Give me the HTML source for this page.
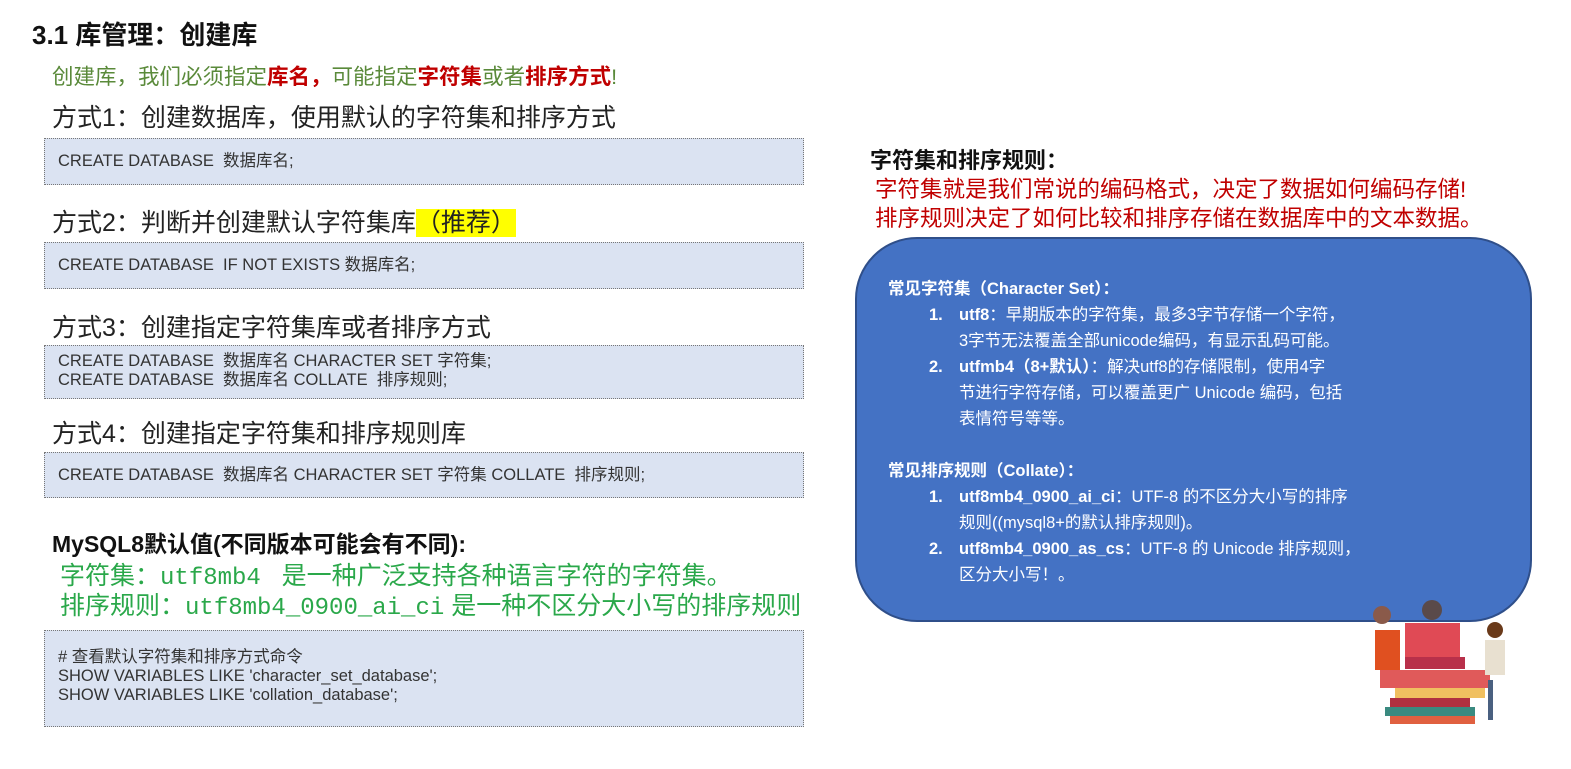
<!DOCTYPE html>
<html><head><meta charset="utf-8"><style>
*{margin:0;padding:0;box-sizing:border-box}
body{width:1571px;height:769px;background:#fff;position:relative;overflow:hidden;font-family:"Liberation Sans","Noto Sans CJK SC",sans-serif;color:#222}
.a{position:absolute;white-space:nowrap}
.box{position:absolute;left:44px;width:760px;background:#dbe3f2;border:1px dotted #777;font-size:16.5px;color:#333;padding-left:13px;line-height:19px}
.h{font-size:25px;color:#222}
.blue{position:absolute;left:855px;top:237px;width:677px;height:385px;background:#4472c4;border:2px solid #2f4f8a;border-radius:62px;color:#fff}
.blue .a{font-size:16.5px;line-height:26px}
b{font-weight:bold}
.r{color:#c00000;font-weight:bold}
</style></head><body>
<div class="a" style="left:32px;top:15px;font-size:26px;font-weight:bold;color:#111">3.1 库管理：创建库</div>
<div class="a" style="left:52px;top:60px;font-size:21.5px;color:#5a8a3a">创建库，我们必须指定<span class="r">库名，</span>可能指定<span class="r">字符集</span>或者<span class="r">排序方式</span>!</div>
<div class="a h" style="left:52px;top:98px">方式1：创建数据库，使用默认的字符集和排序方式</div>
<div class="box" style="top:138px;height:47px;padding-top:13px">CREATE DATABASE&nbsp; 数据库名;</div>
<div class="a h" style="left:52px;top:203px">方式2：判断并创建默认字符集库<span style="background:#ffff00">（推荐）</span></div>
<div class="box" style="top:242px;height:47px;padding-top:13px">CREATE DATABASE&nbsp; IF NOT EXISTS 数据库名;</div>
<div class="a h" style="left:52px;top:308px">方式3：创建指定字符集库或者排序方式</div>
<div class="box" style="top:345px;height:54px;padding-top:6px">CREATE DATABASE&nbsp; 数据库名 CHARACTER SET 字符集;<br>CREATE DATABASE&nbsp; 数据库名 COLLATE&nbsp; 排序规则;</div>
<div class="a h" style="left:52px;top:414px">方式4：创建指定字符集和排序规则库</div>
<div class="box" style="top:452px;height:46px;padding-top:13px">CREATE DATABASE&nbsp; 数据库名 CHARACTER SET 字符集 COLLATE&nbsp; 排序规则;</div>
<div class="a" style="left:52px;top:525px;font-size:23px;font-weight:bold;color:#111">MySQL8默认值(不同版本可能会有不同):</div>
<div class="a" style="left:60px;top:556px;font-size:25px;color:#2aa84a">字符集：<span style="font-family:'Liberation Mono',monospace;font-size:24px">utf8mb4</span>&nbsp;&nbsp; 是一种广泛支持各种语言字符的字符集。</div>
<div class="a" style="left:60px;top:586px;font-size:25px;color:#2aa84a">排序规则：<span style="font-family:'Liberation Mono',monospace;font-size:24px">utf8mb4_0900_ai_ci</span> 是一种不区分大小写的排序规则</div>
<div class="box" style="top:630px;height:97px;padding-top:17px">#&nbsp;查看默认字符集和排序方式命令<br>SHOW VARIABLES LIKE 'character_set_database';<br>SHOW VARIABLES LIKE 'collation_database';</div>

<div class="a" style="left:870px;top:143px;font-size:22px;font-weight:bold;color:#111">字符集和排序规则：</div>
<div class="a" style="left:875px;top:172px;font-size:22.5px;color:#c00000">字符集就是我们常说的编码格式，决定了数据如何编码存储!</div>
<div class="a" style="left:875px;top:201px;font-size:22.5px;color:#c00000">排序规则决定了如何比较和排序存储在数据库中的文本数据。</div>

<div class="blue">
<div class="a" style="left:31px;top:37px"><b>常见字符集（Character Set）：</b></div>
<div class="a" style="left:72px;top:63px"><b>1.</b></div>
<div class="a" style="left:102px;top:63px"><b>utf8</b>：早期版本的字符集，最多3字节存储一个字符，<br>3字节无法覆盖全部unicode编码，有显示乱码可能。</div>
<div class="a" style="left:72px;top:115px"><b>2.</b></div>
<div class="a" style="left:102px;top:115px"><b>utfmb4（8+默认）</b>：解决utf8的存储限制，使用4字<br>节进行字符存储，可以覆盖更广 Unicode 编码，包括<br>表情符号等等。</div>
<div class="a" style="left:31px;top:219px"><b>常见排序规则（Collate）：</b></div>
<div class="a" style="left:72px;top:245px"><b>1.</b></div>
<div class="a" style="left:102px;top:245px"><b>utf8mb4_0900_ai_ci</b>：UTF-8 的不区分大小写的排序<br>规则((mysql8+的默认排序规则)。</div>
<div class="a" style="left:72px;top:297px"><b>2.</b></div>
<div class="a" style="left:102px;top:297px"><b>utf8mb4_0900_as_cs</b>：UTF-8 的 Unicode 排序规则，<br>区分大小写！。</div>
</div>

<svg style="position:absolute;left:1350px;top:585px" width="170" height="140">
<rect x="30" y="85" width="110" height="18" fill="#e05a5a"/>
<rect x="55" y="38" width="55" height="35" fill="#e04a55"/>
<rect x="55" y="72" width="60" height="12" fill="#b8304a"/>
<rect x="45" y="103" width="90" height="10" fill="#f0c060"/>
<rect x="40" y="113" width="80" height="9" fill="#b03040"/>
<rect x="35" y="122" width="90" height="9" fill="#3a8a80"/>
<rect x="40" y="131" width="85" height="8" fill="#e06040"/>
<rect x="25" y="45" width="25" height="40" fill="#e05020"/>
<circle cx="32" cy="30" r="9" fill="#8a5a4a"/>
<circle cx="82" cy="25" r="10" fill="#5a4a4a"/>
<rect x="135" y="55" width="20" height="35" fill="#e8e0d0"/>
<circle cx="145" cy="45" r="8" fill="#6a3a1a"/>
<rect x="138" y="95" width="5" height="40" fill="#4a6080"/>
</svg>
</body></html>
